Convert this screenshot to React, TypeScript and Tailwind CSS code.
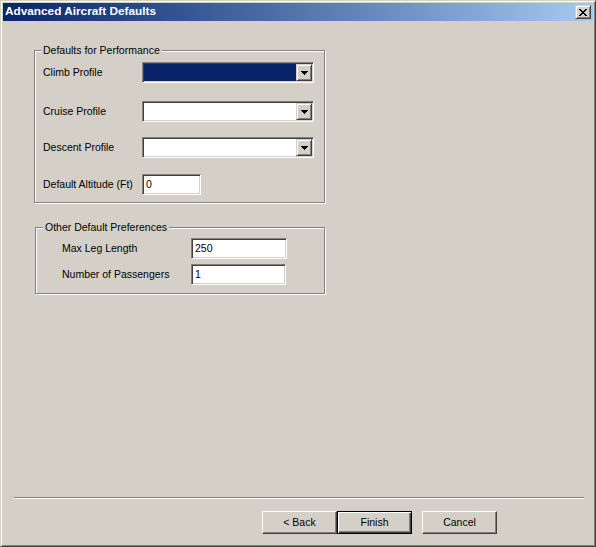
import React from "react";

const FONT = { fontFamily: '"Liberation Sans", Arial, sans-serif' };

function Arrow() {
  return (
    <svg width="7" height="4" viewBox="0 0 7 4" shapeRendering="crispEdges">
      <rect x="0" y="0" width="7" height="1" fill="#000" />
      <rect x="1" y="1" width="5" height="1" fill="#000" />
      <rect x="2" y="2" width="3" height="1" fill="#000" />
      <rect x="3" y="3" width="1" height="1" fill="#000" />
    </svg>
  );
}

function CloseGlyph() {
  const rows = ["11000011", "01100110", "00111100", "00011000", "00111100", "01100110", "11000011"];
  const rects: React.ReactElement[] = [];
  rows.forEach((r, y) =>
    r.split("").forEach((c, x) => {
      if (c === "1") rects.push(<rect key={`${x}-${y}`} x={x} y={y} width="1" height="1" fill="#000" />);
    })
  );
  return (
    <svg width="8" height="7" viewBox="0 0 8 7" shapeRendering="crispEdges">
      {rects}
    </svg>
  );
}

function Combo({ selected }: { selected?: boolean }) {
  return (
    <div className="flex h-[21px] w-[172px] border border-t-[#808080] border-l-[#808080] border-r-white border-b-white bg-white p-[1px] shadow-[inset_1px_1px_0_#404040,inset_-1px_-1px_0_#d4d0c8]">
      <div className={`flex-1 ${selected ? "bg-[#0a246a]" : "bg-white"}`} />
      <div className="flex h-[17px] w-[16px] items-center justify-center border border-t-[#d4d0c8] border-l-[#d4d0c8] border-r-[#404040] border-b-[#404040] bg-[#d4d0c8] shadow-[inset_1px_1px_0_#fff,inset_-1px_-1px_0_#808080]">
        <Arrow />
      </div>
    </div>
  );
}

function Field({ value, w }: { value: string; w: string }) {
  return (
    <div
      className={`flex h-[21px] ${w} items-center border border-t-[#808080] border-l-[#808080] border-r-white border-b-white bg-white pl-[3px] text-[10.5px] leading-none text-black shadow-[inset_1px_1px_0_#404040,inset_-1px_-1px_0_#d4d0c8]`}
    >
      {value}
    </div>
  );
}

function Button({ label, isDefault }: { label: string; isDefault?: boolean }) {
  const cls = isDefault
    ? "border border-black shadow-[inset_1px_1px_0_#fff,inset_-1px_-1px_0_#404040,inset_-2px_-2px_0_#808080]"
    : "border border-t-white border-l-white border-r-[#404040] border-b-[#404040] shadow-[inset_-1px_-1px_0_#808080]";
  return (
    <div className={`flex h-[23px] w-[75px] items-center justify-center bg-[#d4d0c8] text-[10.5px] text-black ${cls}`}>
      {label}
    </div>
  );
}

export default function App() {
  return (
    <div
      style={FONT}
      className="flex h-[547px] w-[596px] flex-col border border-t-[#d4d0c8] border-l-[#d4d0c8] border-r-[#404040] border-b-[#404040] bg-[#d4d0c8] p-[2px] text-black shadow-[inset_1px_1px_0_#fff,inset_-1px_-1px_0_#808080]"
    >
      {/* Title bar */}
      <div className="flex h-[18px] items-center justify-between bg-gradient-to-r from-[#0a246a] to-[#a6caf0] pl-[2px] pr-[2px]">
        <span className="text-[11.8px] font-bold leading-none text-white">Advanced Aircraft Defaults</span>
        <div className="flex h-[14px] w-[16px] items-center justify-center border border-t-[#d4d0c8] border-l-[#d4d0c8] border-r-[#404040] border-b-[#404040] bg-[#d4d0c8] shadow-[inset_1px_1px_0_#fff,inset_-1px_-1px_0_#808080]">
          <CloseGlyph />
        </div>
      </div>

      {/* Group 1 */}
      <div className="relative ml-[31px] mt-[29px] h-[153px] w-[291px] border border-[#808080] pl-[8px] pt-[11px] shadow-[inset_1px_1px_0_#fff,1px_1px_0_#fff]">
        <span className="absolute left-[6px] top-[-7px] bg-[#d4d0c8] px-[2px] text-[10.5px] leading-[13px]">
          Defaults for Performance
        </span>
        <div className="flex h-[21px] items-center">
          <span className="w-[99px] text-[10.5px]">Climb Profile</span>
          <Combo selected />
        </div>
        <div className="mt-[18px] flex h-[21px] items-center">
          <span className="w-[99px] text-[10.5px]">Cruise Profile</span>
          <Combo />
        </div>
        <div className="mt-[15px] flex h-[21px] items-center">
          <span className="w-[99px] text-[10.5px]">Descent Profile</span>
          <Combo />
        </div>
        <div className="mt-[16px] flex h-[21px] items-center">
          <span className="w-[99px] text-[10.5px]">Default Altitude (Ft)</span>
          <Field value="0" w="w-[59px]" />
        </div>
      </div>

      {/* Group 2 */}
      <div className="relative ml-[32px] mt-[24px] h-[67px] w-[290px] border border-[#808080] pl-[26px] pt-[10px] shadow-[inset_1px_1px_0_#fff,1px_1px_0_#fff]">
        <span className="absolute left-[7px] top-[-7px] bg-[#d4d0c8] px-[2px] text-[10.5px] leading-[13px]">
          Other Default Preferences
        </span>
        <div className="flex h-[21px] items-center">
          <span className="w-[129px] text-[10.5px]">Max Leg Length</span>
          <Field value="250" w="w-[96px]" />
        </div>
        <div className="mt-[5px] flex h-[21px] items-center">
          <span className="w-[129px] text-[10.5px]">Number of Passengers</span>
          <Field value="1" w="w-[95px]" />
        </div>
      </div>

      {/* Bottom */}
      <div className="mt-auto mb-[10px]">
        <div className="ml-[11px] h-[2px] w-[570px] border-t border-b border-t-[#808080] border-b-white" />
        <div className="ml-[259px] mt-[12px] flex">
          <Button label="< Back" />
          <Button label="Finish" isDefault />
          <div className="ml-[10px]">
            <Button label="Cancel" />
          </div>
        </div>
      </div>
    </div>
  );
}
